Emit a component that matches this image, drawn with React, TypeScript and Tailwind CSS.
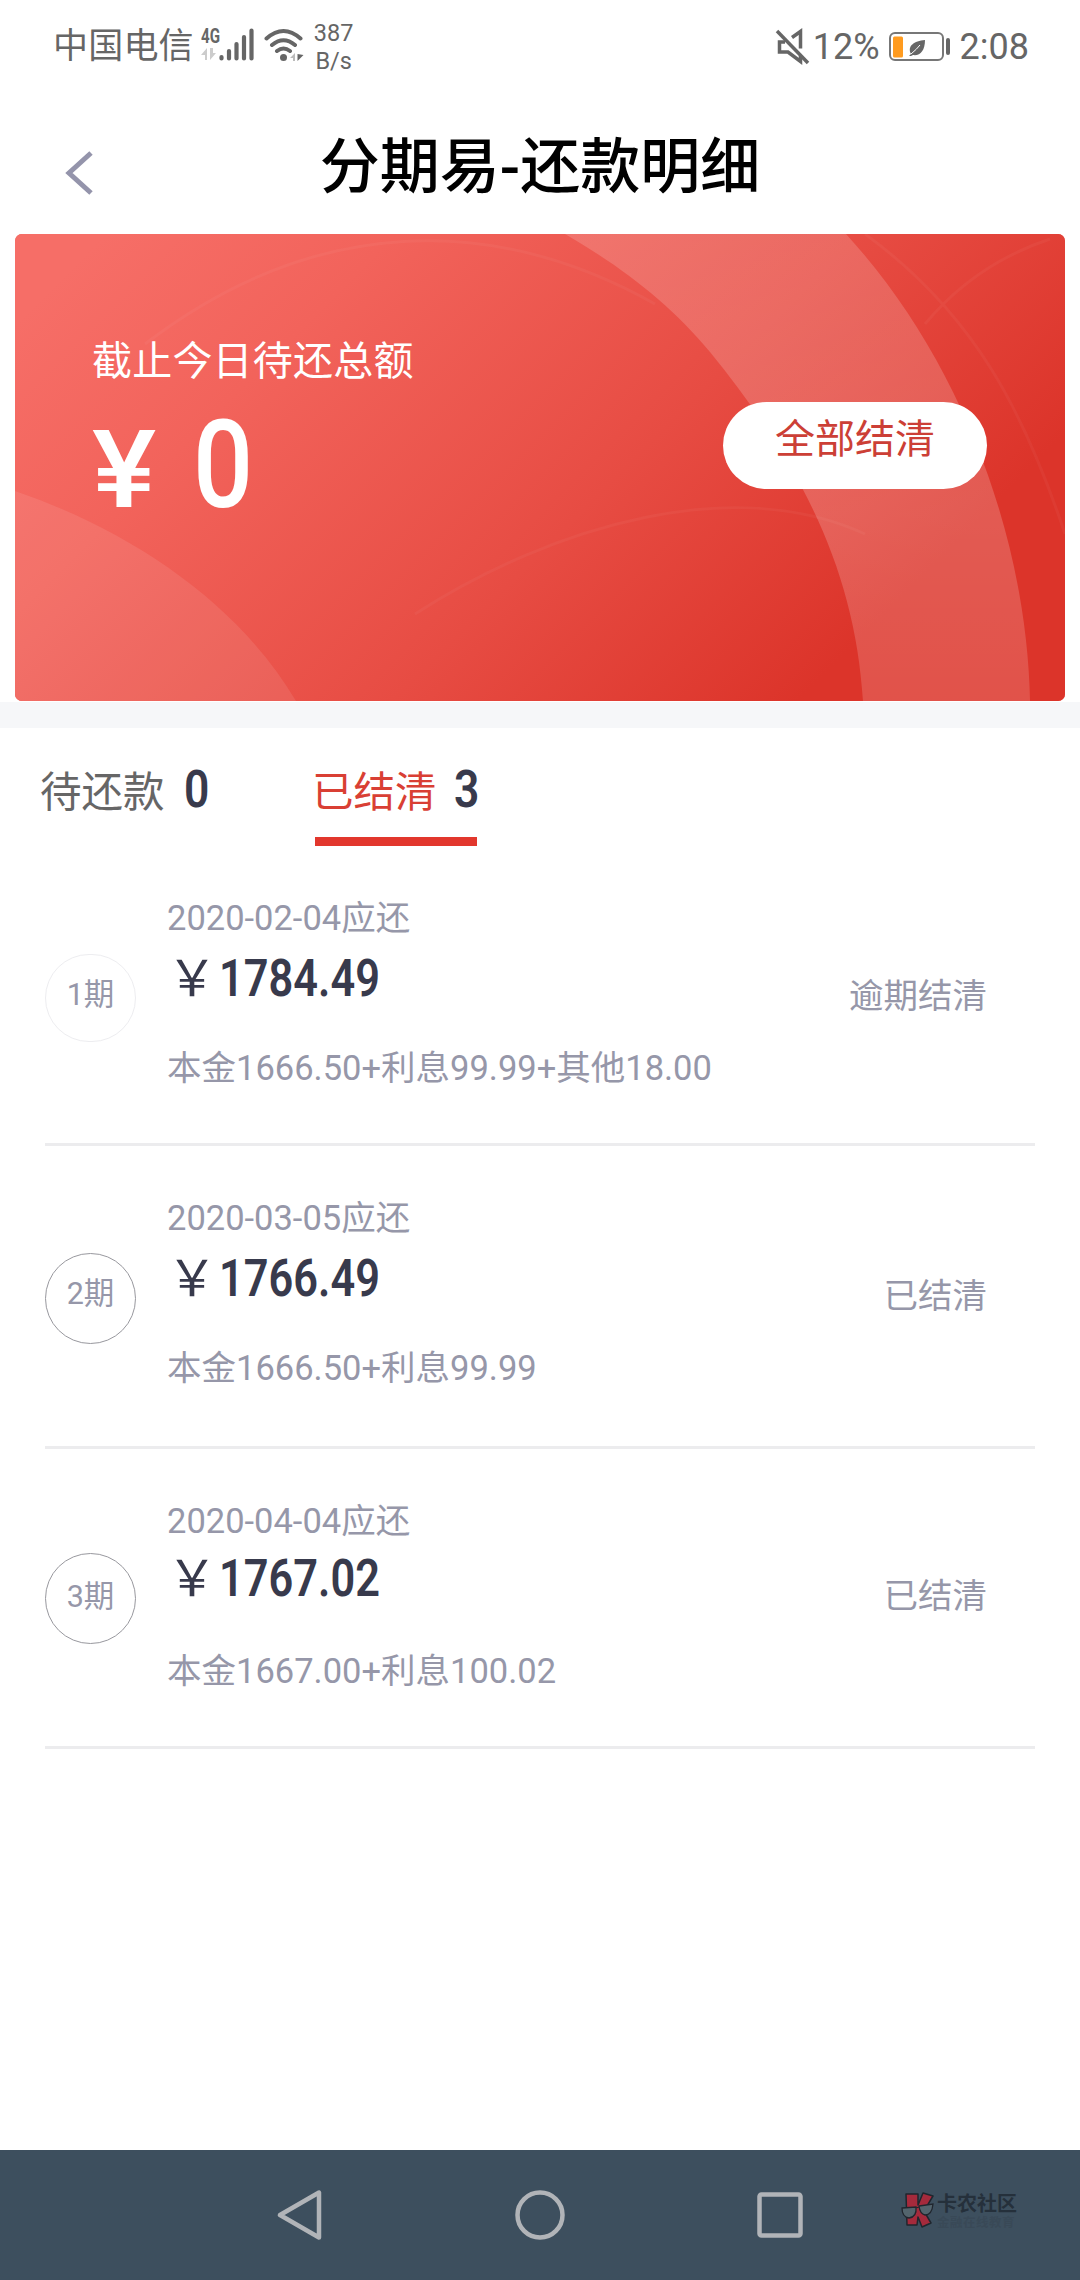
type Period = {
  no: number;
  date: string;
  amount: string;
  detail: string;
  status: string;
};

const periods: Period[] = [
  { no: 1, date: "2020-02-04", amount: "1784.49", detail: "本金1666.50+利息99.99+其他18.00", status: "逾期结清" },
  { no: 2, date: "2020-03-05", amount: "1766.49", detail: "本金1666.50+利息99.99", status: "已结清" },
  { no: 3, date: "2020-04-04", amount: "1767.02", detail: "本金1667.00+利息100.02", status: "已结清" },
];

function StatusBar() {
  return (
    <header className="flex h-[92px] items-center pt-px pr-[51px] pl-[53px] text-[#666]">
      <span className="text-[35px] leading-none tracking-[0.2px]">中国电信</span>

      {/* señal 4G */}
      <svg className="ml-[7px] overflow-visible" width="54" height="40" viewBox="0 0 54 40">
        <text x="0" y="16" fontSize="20" fontWeight="700" fill="#666" textLength="19" lengthAdjust="spacingAndGlyphs">
          4G
        </text>
        <path d="M0 28l6-7v12H4v-5zM9 21v12l6-7h-3v-5z" fill="#ccc" />
        <g stroke="#666" strokeWidth="4.200" strokeLinecap="round">
          <path d="M20.500 30v1.500M28 24v7.500M35.500 17v14.500M43 10v21.500M50.500 3.500v28" />
        </g>
      </svg>

      <svg className="ml-[9px]" width="42" height="40" viewBox="0 0 42 40">
        <g fill="none" stroke="#666" strokeWidth="4" strokeLinecap="round">
          <path d="M2.500 11.500q17-15 34 0M8 18q11.500-9.500 23 0M13 24q6.500-5 13 0" />
        </g>
        <circle cx="19.500" cy="30.500" r="3.500" fill="#666" />
        <path d="M26 31l5-5v8h-2v-3z" fill="#bbb" />
        <path d="M33.500 27v7l6-6z" fill="#666" />
      </svg>

      <div className="ml-[8px] flex flex-col items-center text-[23.500px] leading-[28px]">
        <span>387</span>
        <span>B/s</span>
      </div>

      <div className="ml-auto flex items-center">
        <svg width="36" height="38" viewBox="0 0 36 38">
          <g fill="none" stroke="#666" strokeWidth="3.500">
            <path d="M2 3l31 32" />
            <path d="M10 14H4.500v10H13l12.500 9.500V28M17 9.500l8.500-6v17" />
          </g>
        </svg>
        <span className="ml-[2px] text-[36px] leading-none">12%</span>
        <svg className="ml-[9px]" width="62" height="32" viewBox="0 0 62 32">
          <rect x="1" y="2" width="53" height="27" rx="5" fill="none" stroke="#777" strokeWidth="2" />
          <rect x="4" y="5.500" width="10" height="21" rx="1.500" fill="#ff9b1f" />
          <path d="M20 25l2-2c-4-8 3-13 14-14 0 11-5 16-12 15l-2 1z" fill="#666" />
          <path d="M22 23q6-5 9-9" fill="none" stroke="#fff" strokeWidth="1" />
          <rect x="57" y="7" width="4" height="17" rx="2" fill="#666" />
        </svg>
        <span className="ml-[9px] text-[36px] leading-none">2:08</span>
      </div>
    </header>
  );
}

function TitleBar() {
  return (
    <div className="relative flex h-[142px] justify-center pt-[40px]">
      <h1 className="text-[60px] leading-[72px] font-medium text-black">分期易-还款明细</h1>
      <svg className="absolute top-[58px] left-[64px]" width="32" height="46" viewBox="0 0 32 46">
        <path d="M27 3L5 23l22 20" fill="none" stroke="#9494ab" strokeWidth="5" />
      </svg>
    </div>
  );
}

function SummaryCard() {
  return (
    <section className="relative mx-[15px] h-[467px] overflow-hidden rounded-[7px] bg-[#e84f46]">
      {/* fondo con arcos */}
      <svg className="absolute inset-0" width="1050" height="467" viewBox="0 0 1050 467">
        <defs>
          <linearGradient id="base" gradientUnits="userSpaceOnUse" x1="110" y1="-20" x2="690" y2="560">
            <stop offset="0" stopColor="#f66e67" />
            <stop offset="0.250" stopColor="#f2635b" />
            <stop offset="0.650" stopColor="#e74c43" />
            <stop offset="1" stopColor="#dc342a" />
          </linearGradient>
          <linearGradient id="band" x1="0" y1="0" x2="0" y2="1">
            <stop offset="0" stopColor="#fff" stopOpacity="0.160" />
            <stop offset="0.600" stopColor="#fff" stopOpacity="0.190" />
            <stop offset="1" stopColor="#fff" stopOpacity="0.150" />
          </linearGradient>
        </defs>
        <rect width="1050" height="467" fill="url(#base)" />
        <path d="M550 0C610 35 655 70 695 118C790 235 840 340 848 467H1015C1012 310 950 130 831 0Z" fill="url(#band)" />
        <path d="M0 257C120 298 225 372 281 467H0Z" fill="#fff" fillOpacity="0.090" />
        <g fill="none" stroke="#fff" strokeOpacity="0.040" strokeWidth="3">
          <path d="M130 110C300 -20 480 -20 640 70" />
          <path d="M400 380C540 290 720 240 850 300" />
          <path d="M850 0C960 80 1010 180 1050 300M910 90Q960 30 1035 5" />
        </g>
      </svg>

      <div className="relative flex justify-between pr-[78px] pl-[77px] text-white">
        <div className="pt-[98px]">
          <p className="text-[40px] leading-[60px] tracking-[0.200px]">截止今日待还总额</p>
          <p className="mt-[8px] flex h-[110px] items-baseline font-medium">
            <span className="w-[101px] origin-left scale-x-[1.120] text-[108px] leading-[130px]">¥</span>
            <span className="origin-left scale-x-[0.860] text-[123px] leading-[130px]">0</span>
          </p>
        </div>
        <button className="mt-[168px] h-[87px] w-[264px] rounded-full bg-white pb-[12px] text-[40px] leading-none text-[#cc3f36]">
          全部结清
        </button>
      </div>
    </section>
  );
}

function Tabs() {
  return (
    <nav className="flex h-[118px] pl-[40px] text-[41.500px] whitespace-nowrap">
      <div className="flex w-[272px] items-baseline pt-[32px] leading-[60px] text-[#666]">
        待还款
        <span className="ml-[19px] origin-left scale-x-[0.870] text-[51px] font-semibold text-[#383a4c]">0</span>
      </div>
      <div className="w-[166px]">
        <div className="flex items-baseline pt-[32px] leading-[60px] text-[#d93f34]">
          已结清
          <span className="ml-[17px] origin-left scale-x-[0.870] text-[51px] font-semibold text-[#383a4c]">3</span>
        </div>
        <div className="mt-[14px] ml-[3px] h-[9px] w-[162px] bg-[#e2372d]" />
      </div>
    </nav>
  );
}

function PeriodRow({ item }: { item: Period }) {
  return (
    <li
      className={`flex border-b-[3px] border-[#ececee] text-[#9697a9] ${item.no === 2 ? "h-[303px]" : "h-[300px]"}`}
    >
      <div
        className={`flex w-[91px] shrink-0 justify-center rounded-full border text-[30.500px] leading-[44px] ${
          item.no === 1 ? "mt-[108px] h-[88px] border-[#ededf0]" : "h-[91px] border-[#98989e]"
        } ${item.no === 2 ? "mt-[107px]" : ""} ${item.no === 3 ? "mt-[104px] pt-[21px]" : "pt-[18px]"}`}
      >
        {item.no}期
      </div>
      <div className="ml-[31px] flex-1 text-[34.500px]">
        <p className="mt-[50px] leading-[44px]">{item.date}应还</p>
        <p
          className={`flex items-baseline text-[51px] leading-[72px] text-[#383a4c] ${
            item.no === 3 ? "mt-0 mb-[34px]" : "mt-[3px] mb-[31px]"
          }`}
        >
          <span className="text-[50px]">￥</span>
          <span className="ml-[2px] origin-left scale-x-[0.850] font-semibold">{item.amount}</span>
        </p>
        <p className="leading-[44px]">{item.detail}</p>
      </div>
      <p className={`mr-[48px] text-[34.500px] leading-[44px] ${item.no === 3 ? "mt-[125px]" : "mt-[128px]"}`}>
        {item.status}
      </p>
    </li>
  );
}

function NavBar() {
  return (
    <footer className="relative flex h-[130px] items-center justify-center gap-[190px] bg-[#3d4f5e]">
      <svg width="50" height="50" viewBox="0 0 50 50" fill="none" stroke="#b1b4b8" strokeWidth="4.500" strokeLinejoin="round">
        <path d="M44 2.500v45L5 25z" />
      </svg>
      <svg width="50" height="50" viewBox="0 0 50 50" fill="none" stroke="#b1b4b8" strokeWidth="4.500">
        <circle cx="25" cy="25" r="22.500" />
      </svg>
      <svg width="50" height="50" viewBox="0 0 50 50" fill="none" stroke="#b1b4b8" strokeWidth="4.500">
        <rect x="4.500" y="4.500" width="41" height="41" rx="2" />
      </svg>

      {/* marca de agua de la comunidad */}
      <div className="absolute top-[42px] left-[900px] flex">
        <svg width="35" height="37" viewBox="0 0 35 37">
          <path
            d="M6 2h12v11l5-12 10 3-9 15 7 12-9 4-4-10-1 8H7z"
            fill="#a52a3c"
            stroke="#20262e"
            strokeWidth="1.500"
            strokeLinejoin="round"
          />
          <g fill="#53646d" stroke="#20262e" strokeWidth="1.300">
            <path d="M2 16l14-1q1 10-7 11-7-1-7-10zM19 14l14-2q-1 11-8 11-5-1-6-9zM16 16l3-1" />
          </g>
        </svg>
        <div className="ml-[2px] font-bold">
          <p className="text-[20px] leading-[24px] text-[#25303b]">卡农社区</p>
          <p className="text-[12.500px] leading-[14px] tracking-[0.500px] text-[#394957]">金融在线教育</p>
        </div>
      </div>
    </footer>
  );
}

export default function App() {
  return (
    <div className="flex h-[2280px] w-[1080px] flex-col overflow-hidden bg-white font-[Roboto,'Noto_Sans_CJK_SC',sans-serif]">
      <StatusBar />
      <TitleBar />
      <SummaryCard />
      <div className="mt-px h-[26px] shrink-0 bg-[#f6f7f9]" />
      <Tabs />
      <ul className="mr-[45px] ml-[45px]">
        {periods.map((item) => (
          <PeriodRow key={item.no} item={item} />
        ))}
      </ul>
      <div className="flex-1" />
      <NavBar />
    </div>
  );
}
